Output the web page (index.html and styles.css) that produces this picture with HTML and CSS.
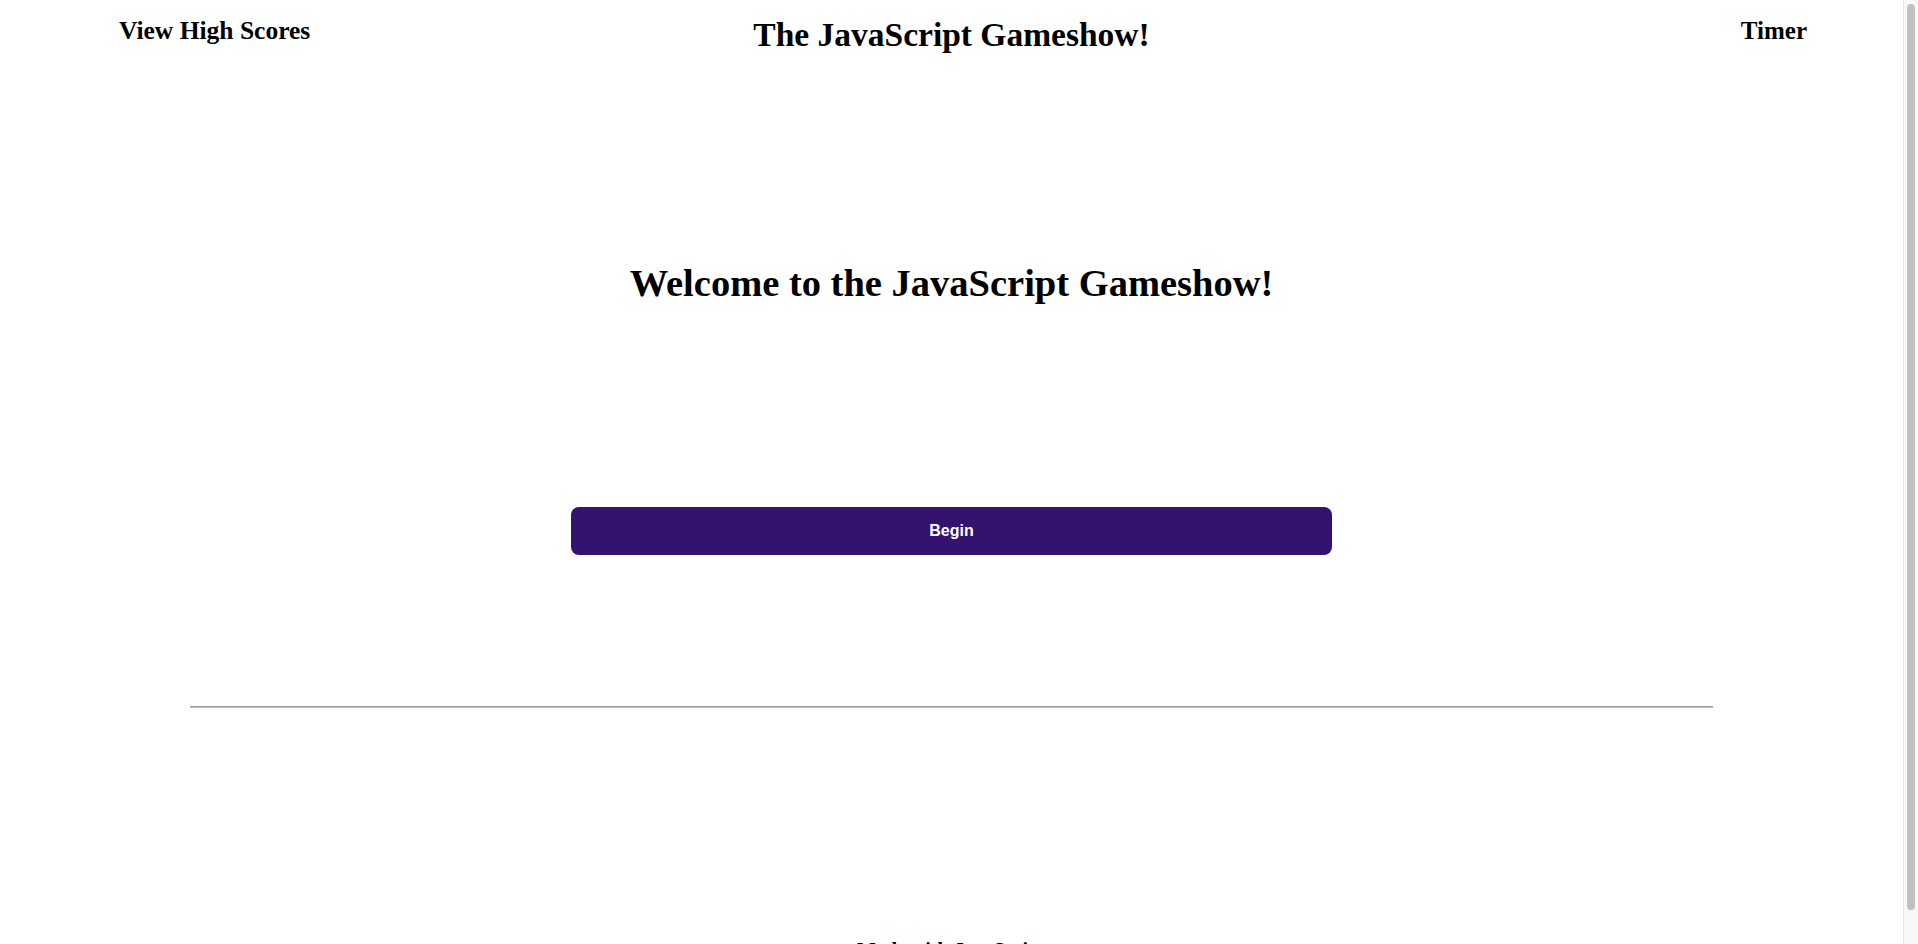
FILE: index.html
```html
<!DOCTYPE html>
<html lang="en">
<head>
<meta charset="utf-8">
<title>The JavaScript Gameshow!</title>
<link rel="stylesheet" href="styles.css">
</head>
<body>
<div class="page">
  <header class="topbar">
    <a class="scores-link" href="#">View High Scores</a>
    <h2 class="site-title">The JavaScript Gameshow!</h2>
    <div class="timer">Timer</div>
  </header>
  <main class="stage">
    <h1 class="welcome">Welcome to the JavaScript Gameshow!</h1>
    <button class="begin-btn" type="button">Begin</button>
    <hr class="divider">
  </main>
  <footer class="footer">Made with JavaScript</footer>
</div>
<div class="scrollbar" aria-hidden="true"><div class="scrollbar-thumb"></div></div>
</body>
</html>
```

FILE: styles.css
```css
html, body {
  margin: 0;
  padding: 0;
  background: #ffffff;
}

body {
  font-family: "Liberation Serif", "Times New Roman", serif;
  color: #000000;
}

.page {
  width: calc(100% - 15px);
}

.topbar {
  display: grid;
  grid-template-columns: 1fr auto 1fr;
  align-items: start;
  padding: 15px 96px 0;
}

.scores-link {
  justify-self: start;
  margin-left: 23px;
  padding-top: 1px;
  font-size: 25.5px;
  line-height: 30px;
  font-weight: bold;
  color: #000000;
  text-decoration: none;
}

.site-title {
  margin: 0;
  font-size: 33.5px;
  line-height: 40px;
  font-weight: bold;
  text-align: center;
}

.timer {
  justify-self: end;
  padding-top: 1px;
  font-size: 25px;
  line-height: 30px;
  font-weight: bold;
}

.stage {
  display: flex;
  flex-direction: column;
  align-items: center;
}

.welcome {
  margin: 205px 0 0;
  font-size: 38.5px;
  line-height: 46px;
  font-weight: bold;
  text-align: center;
}

.begin-btn {
  margin-top: 201px;
  width: 40%;
  height: 48px;
  border: none;
  border-radius: 8px;
  background: #341270;
  color: #ffffff;
  font-family: "Liberation Sans", Arial, sans-serif;
  font-size: 16px;
  font-weight: bold;
  cursor: pointer;
}

.divider {
  width: 80%;
  margin: 151px auto 0;
  border: none;
  border-top: 1px solid #9c9c9c;
  border-bottom: 1px solid #bdbdbd;
}

.footer {
  margin-top: 230px;
  padding-bottom: 6px;
  text-align: center;
  font-size: 20px;
  line-height: 24px;
  font-weight: bold;
}

.scrollbar {
  position: fixed;
  top: 0;
  right: 0;
  bottom: 0;
  width: 15px;
  background: #f8f8f8;
  border-left: 1px solid #e6e6e6;
  box-sizing: border-box;
}

.scrollbar-thumb {
  position: absolute;
  top: 4px;
  left: 3px;
  right: 3px;
  height: 906px;
  border-radius: 5px;
  background: #c1c1c1;
}
```
